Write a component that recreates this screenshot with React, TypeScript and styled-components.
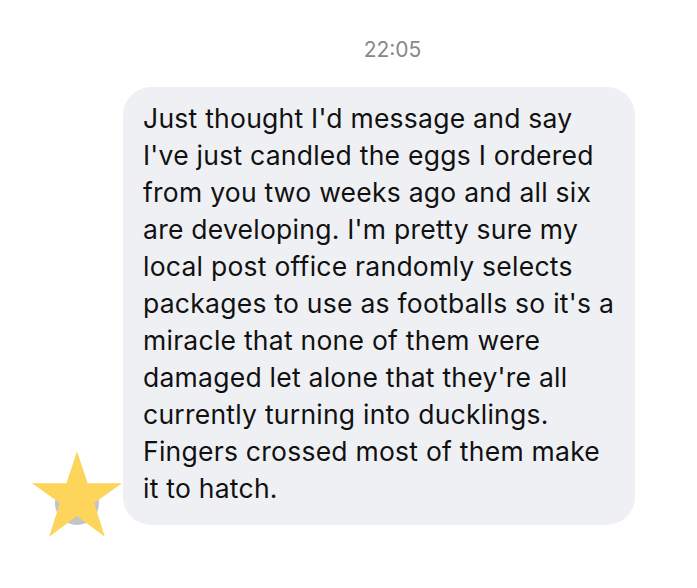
import styled, { createGlobalStyle } from 'styled-components'

const GlobalStyle = createGlobalStyle`
  html, body {
    margin: 0;
    padding: 0;
    background: #ffffff;
  }
  body {
    font-family: Inter, 'Open Sans', sans-serif;
  }
`

const lines = [
  "Just thought I'd message and say",
  "I've just candled the eggs I ordered",
  'from you two weeks ago and all six',
  "are developing. I'm pretty sure my",
  'local post office randomly selects',
  "packages to use as footballs so it's a",
  'miracle that none of them were',
  "damaged let alone that they're all",
  'currently turning into ducklings.',
  'Fingers crossed most of them make',
  'it to hatch.',
]

export default function App() {
  return (
    <>
      <GlobalStyle />
      <Page>
        <TimeRow>22:05</TimeRow>
        <MessageRow>
          <AvatarColumn>
            <Avatar>
              <Star viewBox="0 0 100 95">
                <polygon points="50,0 61.8,35.5 100,35.5 69.1,57.5 80.9,95 50,72 19.1,95 30.9,57.5 0,35.5 38.2,35.5" />
              </Star>
            </Avatar>
          </AvatarColumn>
          <Bubble>
            {lines.map((line) => (
              <Line key={line}>{line}</Line>
            ))}
          </Bubble>
        </MessageRow>
      </Page>
    </>
  )
}

const Page = styled.div`
  width: 697px;
  height: 588px;
  display: flex;
  flex-direction: column;
  box-sizing: border-box;
  padding-top: 36px;
`

const TimeRow = styled.div`
  padding-left: 88px;
  text-align: center;
  font-size: 21px;
  line-height: 28px;
  color: #86888c;
`

const MessageRow = styled.div`
  display: flex;
  align-items: flex-end;
  margin-top: 23px;
`

const AvatarColumn = styled.div`
  width: 123px;
  display: flex;
  justify-content: flex-start;
`

const Avatar = styled.div`
  position: relative;
  width: 44px;
  height: 44px;
  border-radius: 50%;
  background: #c3c4c6;
  margin-left: 55px;
`

const Star = styled.svg`
  position: absolute;
  left: -23px;
  top: -30px;
  width: 90px;
  height: 86px;
  fill: #fdd55b;
`

const Bubble = styled.div`
  width: 512px;
  box-sizing: border-box;
  padding: 13px 10px 18px 20px;
  background: #eff0f4;
  border-radius: 28px;
  color: #111111;
  font-size: 26.5px;
  line-height: 37px;
  letter-spacing: 0.25px;
`

const Line = styled.span`
  display: block;
  white-space: nowrap;
`
